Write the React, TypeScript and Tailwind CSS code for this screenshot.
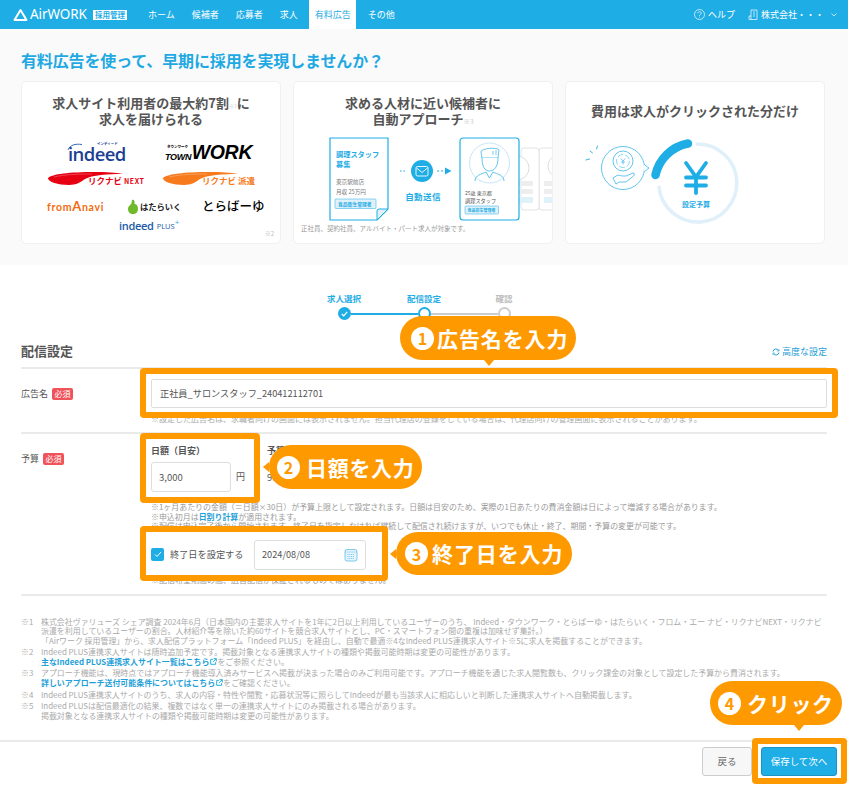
import React from "react";

const FONT = '"Noto Sans CJK JP", "Noto Sans", sans-serif';
const BLUE = "#1fade5";

function Frame({ className }: { className: string }) {
  return <div className={`absolute border-[6px] border-[#ff9900] rounded-[4px] pointer-events-none ${className}`} />;
}

function Num({ n }: { n: string }) {
  return (
    <span className="w-[23px] h-[23px] rounded-full bg-white text-[#ff9900] text-[16px] font-bold flex items-center justify-center shrink-0 leading-none tracking-normal">
      {n}
    </span>
  );
}

function Required() {
  return (
    <span className="inline-flex items-center justify-center w-[21px] h-[12px] rounded-[2px] bg-[#f0525a] text-white text-[8px] leading-none">
      必須
    </span>
  );
}

function Swoosh({ color, width }: { color: string; width: number }) {
  return (
    <svg width={width} height="15" viewBox="0 0 98 15" className="shrink-0">
      <path d="M0 7 C4 3 22 1 46 1 C58 1 68 1.500 75 3 C60 3 44 4 37 8 C33 11 28 14 21 14 C10 14 0 11 0 7Z" fill={color} />
      <path d="M6 6 C16 3.500 30 3 44 3" stroke="#fff" strokeWidth="0.5" fill="none" opacity="0.5" />
    </svg>
  );
}

function Logos() {
  return (
    <div className="flex flex-col mt-[19px]">
      <div className="flex h-[25px] items-start">
        <div className="ml-[46px] w-[97px] relative text-[#1c3f94] text-[18.500px] font-semibold leading-[16px] tracking-[-0.6px]" style={{ fontFamily: '"Open Sans", sans-serif' }}>
          indeed
          <svg width="16" height="8" viewBox="0 0 16 8" fill="none" stroke="#1c5aa8" strokeWidth="0.900" className="absolute -left-[1px] -top-[3px]">
            <path d="M1 7 C3 2 8 0.500 15 1.500" />
          </svg>
          <span className="absolute left-[29px] -top-[4px] text-[3.500px] leading-none tracking-normal" style={{ fontFamily: FONT }}>インディード</span>
        </div>
        <div className="flex items-end h-[16px] text-black italic font-black relative leading-none" style={{ fontFamily: '"Liberation Sans", sans-serif' }}>
          <span className="text-[9px] font-bold tracking-[-0.3px]">TOWN</span>
          <span className="text-[19.500px] font-bold tracking-[-0.3px] ml-[0.500px]">WORK</span>
          <span className="absolute left-[2px] -top-[1px] text-[3.500px] not-italic tracking-normal" style={{ fontFamily: FONT }}>タウンワーク</span>
        </div>
      </div>
      <div className="flex h-[24px] items-start">
        <div className="ml-[26px] w-[115px] relative h-[15px]">
          <Swoosh color="#e60012" width={98} />
          <span className="absolute left-[40px] top-[3px] text-[#e60012] text-[8.500px] font-bold leading-[12px] whitespace-nowrap">リクナビ <span className="text-[7px] tracking-[0.6px]">NEXT</span></span>
        </div>
        <div className="relative h-[15px]">
          <Swoosh color="#f77a1c" width={98} />
          <span className="absolute left-[39px] top-[3px] text-[#f77a1c] text-[8.500px] font-bold leading-[12px] whitespace-nowrap">リクナビ 派遣</span>
        </div>
      </div>
      <div className="flex h-[23px] items-center">
        <span className="ml-[25px] w-[81px] text-[#f26b10] text-[10.500px] font-bold leading-none tracking-[0.7px] whitespace-nowrap" style={{ fontFamily: '"Lato", sans-serif' }}>from<span className="text-[13px]">A</span>navi</span>
        <span className="w-[11px] h-[15px] mr-[1px] flex items-center">
          <svg width="10" height="15" viewBox="0 0 10 15"><path d="M4 1 C6 0 7 2 6.500 5 C9 5 10 7 10 10 C10 13 8 15 5 15 C2 15 0 13 0 10 C0 7 3 6 3.500 4Z" fill="#6fb92c" /></svg>
        </span>
        <span className="w-[62px] text-[#222] text-[8.300px] font-bold leading-none whitespace-nowrap">はたらいく</span>
        <span className="text-black text-[12.500px] font-medium leading-none whitespace-nowrap">とらばーゆ</span>
      </div>
      <div className="flex items-center mt-[2px] ml-[97px] leading-none" style={{ fontFamily: '"Open Sans", sans-serif' }}>
        <span className="text-[#1c5aa8] text-[11px] font-semibold tracking-[-0.3px]">indeed</span>
        <span className="text-[#1c5aa8] text-[7.500px] ml-[3px] mt-[2px]">PLUS</span>
        <span className="text-[#36a9e1] text-[8px] -mt-[8px]">+</span>
      </div>
    </div>
  );
}

function Approach() {
  return (
    <svg width="260" height="86" viewBox="0 0 260 86" className="mt-[10px] block">
      <g fontFamily={FONT}>
        <path d="M36 1 H94 V72 L83 83 H36 Z" fill="#fff" stroke={BLUE} strokeWidth="1.200" strokeLinejoin="round" />
        <path d="M94 72 H85 Q83 72 83 74 V83 Z" fill="#e1f1fa" stroke={BLUE} strokeWidth="1" strokeLinejoin="round" />
        <text x="42" y="20" fontSize="7.200" fontWeight="700" fill={BLUE}>調理スタッフ</text>
        <text x="42" y="30" fontSize="7.200" fontWeight="700" fill={BLUE}>募集</text>
        <text x="42" y="47" fontSize="5.600" fill="#777">東京駅前店</text>
        <text x="42" y="57" fontSize="5.600" fill="#777">月収 25万円</text>
        <rect x="41" y="62" width="41" height="9.500" rx="1" fill="#e1f1fa" stroke={BLUE} strokeWidth="0.500" />
        <text x="44" y="69" fontSize="4.800" fontWeight="700" fill={BLUE}>食品衛生管理者</text>

        <rect x="245" y="11" width="30" height="62" rx="3" fill="#fff" stroke="#e3e3e3" />
        <rect x="227" y="11" width="18" height="62" rx="3" fill="#fff" stroke="#e3e3e3" />
        <circle cx="223" cy="31" r="12" fill="#fff" stroke="#ddd" />
        <rect x="225" y="44" width="14" height="5" fill="#eee" /><rect x="225" y="52" width="14" height="5" fill="#eee" /><rect x="225" y="60" width="14" height="6" fill="#e1f1fa" />
        <circle cx="265" cy="29" r="11" fill="#fff" stroke="#ddd" />
        <rect x="250" y="44" width="10" height="5" fill="#eee" /><rect x="250" y="52" width="10" height="5" fill="#eee" /><rect x="250" y="60" width="10" height="6" fill="#e1f1fa" />

        <rect x="166" y="1" width="59" height="82" rx="3" fill="#fff" stroke={BLUE} strokeWidth="1.200" />
        <circle cx="195.500" cy="26" r="20" fill="#fff" stroke="#c5e5f6" strokeWidth="1" />
        <path d="M187 15 C187 11 204 10 205 13 L204 21 H188 Z" fill="#fff" stroke={BLUE} strokeWidth="0.700" />
        <path d="M188 21 C188 30 191 34 195.500 34 C200 34 204 30 204 21" fill="#fff" stroke={BLUE} strokeWidth="0.700" />
        <path d="M181 44 C181 38 188 37 192 35 M210 44 C210 38 203 37 199 35 M192 35 L195.500 41 L199 35" fill="none" stroke={BLUE} strokeWidth="0.700" />
        <path d="M199 14 V18 M202 13 V18" stroke={BLUE} strokeWidth="0.600" />
        <text x="171" y="58" fontSize="5" fill="#555">25歳 東京都</text>
        <text x="171" y="66" fontSize="5.200" fill="#555">調理スタッフ</text>
        <rect x="171" y="69" width="33.500" height="8" rx="1" fill="#e1f1fa" stroke={BLUE} strokeWidth="0.500" />
        <text x="173.500" y="75" fontSize="4" fontWeight="700" fill={BLUE}>食品衛生管理者</text>

        <circle cx="128" cy="34" r="11" fill={BLUE} />
        <rect x="122" y="29.500" width="12" height="9.500" rx="1.500" fill="none" stroke="#fff" strokeWidth="0.900" />
        <path d="M122.500 31 L128 35.500 L133.500 31" fill="none" stroke="#fff" strokeWidth="0.900" />
        <path d="M106 34 H113" stroke={BLUE} strokeWidth="1.200" strokeDasharray="1.500 2" />
        <path d="M143 34 H151" stroke={BLUE} strokeWidth="1.200" strokeDasharray="2 2" />
        <path d="M151 30.500 L157.500 34 L151 37.500 Z" fill={BLUE} />
        <text x="129" y="63" fontSize="8.500" fontWeight="700" fill={BLUE} textAnchor="middle" letterSpacing="0.400">自動送信</text>
      </g>
    </svg>
  );
}

function Budget() {
  return (
    <svg width="258" height="110" viewBox="0 0 258 110" className="block mt-[2px]">
      <g fontFamily={FONT} fill="none">
        <circle cx="57" cy="47" r="21.500" fill="#fff" stroke={BLUE} strokeWidth="0.700" />
        <path d="M78 43.500 L83 47 L78.500 50.500" fill="#fff" stroke={BLUE} strokeWidth="0.700" strokeLinejoin="round" />
        <path d="M78 44.500 V49.500" stroke="#fff" strokeWidth="1.400" />
        <circle cx="57" cy="40" r="10" stroke={BLUE} strokeWidth="0.700" />
        <circle cx="57" cy="40" r="6.500" stroke={BLUE} strokeWidth="0.500" strokeDasharray="6 2" />
        <path d="M54.800 37.500 L57 40 L59.200 37.500 M57 40 V43.500 M55 41 H59" stroke={BLUE} strokeWidth="0.600" />
        <path d="M47 57 L51 54.500 C53 53.500 54 55 57 55 H60 L67 52 C69 52 68.500 54 67.500 55 L60 61 H53 L50 63 Z" stroke={BLUE} strokeWidth="0.700" fill="#fff" strokeLinejoin="round" />
        <path d="M20 39 L23.500 38 M24 30 L26.500 32 M31.500 25 L30.500 28" stroke={BLUE} strokeWidth="0.900" strokeLinecap="round" />
        <path d="M131 23 A39 39 0 1 1 93 66" stroke="#e0f0fa" strokeWidth="3.500" strokeLinecap="round" />
        <path d="M122 22.500 A41 41 0 0 0 89.500 54" stroke={BLUE} strokeWidth="8.500" strokeLinecap="round" />
        <path d="M120 42 L130 56 L140 42 M130 56 V72 M120 56.500 H140 M120 64.500 H140" stroke={BLUE} strokeWidth="3.800" strokeLinecap="round" strokeLinejoin="round" />
        <text x="130" y="86" fontSize="7" fontWeight="700" fill={BLUE} textAnchor="middle" stroke="none">設定予算</text>
      </g>
    </svg>
  );
}

function ExtIcon() {
  return (
    <svg width="7" height="7" viewBox="0 0 10 10" className="inline-block align-baseline mx-[0.500px]" fill="none" stroke={BLUE} strokeWidth="1.400">
      <path d="M4 2 H1 V9 H8 V6" />
      <path d="M5 1 H9 V5 M9 1 L4.500 5.500" />
    </svg>
  );
}

function Foot({ mark, children }: { mark: string; children: React.ReactNode }) {
  return (
    <div className="flex mb-[2.500px]">
      <span className="w-[20px] shrink-0">{mark}</span>
      <div>{children}</div>
    </div>
  );
}

export default function App() {
  return (
    <div className="relative w-[848px] h-[788px] overflow-hidden bg-white text-[#555]" style={{ fontFamily: FONT }}>
      <header className="h-[29px] bg-[#1fade5] flex items-center text-white text-[9px] whitespace-nowrap">
        <div className="flex items-center ml-[13px] w-[130px]">
          <svg width="15" height="14" viewBox="0 0 15 14" fill="none" stroke="#fff" strokeWidth="2" strokeLinejoin="round"><path d="M7.500 2 L13.500 12 H1.500 Z" /></svg>
          <span className="ml-[2px] w-[58px] text-[13.500px] leading-none tracking-[-0.1px]" style={{ fontFamily: '"Noto Sans", sans-serif' }}>AirWORK</span>
          <span className="ml-[5px] w-[34px] h-[10px] bg-white text-[#1fade5] text-[7.500px] leading-none font-bold flex items-center justify-center">採用管理</span>
        </div>
        <nav className="flex h-full -ml-[0.500px] gap-[6px]">
          {["ホーム", "候補者", "応募者", "求人", "有料広告", "その他"].map((t) => (
            <span key={t} className={`h-full flex items-center px-[5.500px] ${t === "有料広告" ? "bg-white text-[#1fade5]" : ""}`}>{t}</span>
          ))}
        </nav>
        <div className="ml-auto flex items-center mr-[11px]">
          <svg width="11" height="11" viewBox="0 0 11 11" fill="none" stroke="#fff" strokeWidth="0.700">
            <circle cx="5.500" cy="5.500" r="5" />
            <path d="M3.800 4.200 C3.800 2.200 7.300 2.200 7.300 4.200 C7.300 5.400 5.500 5.300 5.500 6.800 M5.500 7.800 V8.600" />
          </svg>
          <span className="ml-[3px]">ヘルプ</span>
          <svg width="10" height="11" viewBox="0 0 10 11" fill="none" stroke="#fff" strokeWidth="0.700" className="ml-[13px]">
            <path d="M3 10.500 V1 H9 V10.500 H3 M3 7 H1 V10.500 H3 M5 3 H7 M5 5 H7 M5 7 H7" />
          </svg>
          <span className="ml-[3px]">株式会社・・・</span>
          <svg width="6" height="4" viewBox="0 0 6 4" fill="none" stroke="#fff" strokeWidth="0.700" className="ml-[7px]"><path d="M0.500 0.500 L3 3 L5.500 0.500" /></svg>
        </div>
      </header>

      <section className="h-[236px] bg-[#fafafa] px-[21px]">
        <h1 className="pt-[21px] h-[52px] text-[#1fa9e3] text-[16px] leading-[20px] font-bold whitespace-nowrap tracking-[-0.13px]">有料広告を使って、早期に採用を実現しませんか？</h1>
        <div className="grid grid-cols-[260px_260px_260px] gap-[12px]">
          <div className="relative h-[163px] bg-white rounded-[5px] border border-[#f0f0f0] pt-[13px]">
            <p className="text-center text-[13px] leading-[16px] font-bold text-[#555]">
              求人サイト利用者の最大約7割<span className="text-[5px] leading-[0] font-normal text-[#ccc]">※1</span>に<br />求人を届けられる
            </p>
            <Logos />
            <span className="absolute right-[6px] bottom-[5px] text-[6px] text-[#bbb]">※2</span>
          </div>
          <div className="h-[163px] bg-white rounded-[5px] border border-[#f0f0f0] pt-[13px] overflow-hidden">
            <p className="text-center text-[13px] leading-[16px] font-bold text-[#555]">
              求める人材に近い候補者に<br />自動アプローチ<span className="text-[6.500px] leading-[0] font-normal text-[#ccc]">※3</span>
            </p>
            <Approach />
            <p className="ml-[7px] text-[6.500px] leading-[10px] text-[#999] whitespace-nowrap">正社員、契約社員、アルバイト・パート求人が対象です。</p>
          </div>
          <div className="h-[163px] bg-white rounded-[5px] border border-[#f0f0f0] pt-[21px]">
            <p className="text-center text-[13px] leading-[16px] font-bold text-[#555]">費用は求人がクリックされた分だけ</p>
            <Budget />
          </div>
        </div>
      </section>

      <main className="px-[21px]">
        <div className="flex flex-col items-center pt-[27px] h-[74px]">
          <div className="flex w-[240px] text-[8.500px] leading-[12px] font-bold text-center">
            <span className="w-[80px] text-[#1fade5]">求人選択</span>
            <span className="w-[80px] text-[#1fade5]">配信設定</span>
            <span className="w-[80px] text-[#bbb]">確認</span>
          </div>
          <div className="flex items-center mt-[3px]">
            <span className="w-[13px] h-[13px] rounded-full bg-[#1fade5] flex items-center justify-center">
              <svg width="7" height="6" viewBox="0 0 7 6" fill="none" stroke="#fff" strokeWidth="1.200"><path d="M0.800 3 L2.700 4.800 L6.200 0.800" /></svg>
            </span>
            <span className="w-[67px] h-[2px] bg-[#1fade5]" />
            <span className="w-[13px] h-[13px] rounded-full border-2 border-[#1fade5] bg-white" />
            <span className="w-[67px] h-[2px] bg-[#ccc]" />
            <span className="w-[13px] h-[13px] rounded-full border-2 border-[#ccc] bg-white" />
          </div>
        </div>

        <div className="flex items-end justify-between h-[30px] pb-[6px] border-b-2 border-[#eaeaea]">
          <h2 className="text-[13px] leading-[20px] font-bold text-[#555]">配信設定</h2>
          <span className="flex items-center text-[#1fa0d8] text-[9px] leading-[12px] mb-[3px]">
            <svg width="8" height="8" viewBox="0 0 8 8" fill="none" stroke="#1fa0d8" strokeWidth="1" className="mr-[2px]">
              <path d="M1 3.500 A3 3 0 0 1 6.600 2.500 M7 4.500 A3 3 0 0 1 1.400 5.500" />
              <path d="M7 1 V3 H5 M1 7 V5 H3" strokeWidth="0.700" />
            </svg>
            高度な設定
          </span>
        </div>

        <div className="flex h-[65px] border-b-2 border-[#eaeaea]">
          <div className="w-[130px] flex items-center gap-[4px] h-[49px] text-[9px]">
            <span>広告名</span>
            <Required />
          </div>
          <div className="flex-1 pt-[10px]">
            <div className="h-[29px] border border-[#ddd] rounded-[2px] bg-white flex items-center pl-[8px] text-[9.200px] text-[#555]">正社員_サロンスタッフ_240412112701</div>
            <p className="mt-[5px] text-[8px] leading-[11px] text-[#aaa] whitespace-nowrap">※設定した広告名は、求職者向けの画面には表示されません。担当代理店の登録をしている場合は、代理店向けの管理画面に表示されることがあります。</p>
          </div>
        </div>

        <div className="flex h-[162px] border-b-2 border-[#eaeaea]">
          <div className="w-[130px] flex items-start gap-[4px] pt-[19px] text-[9px] leading-[12px]">
            <span>予算</span>
            <Required />
          </div>
          <div className="flex-1 pt-[10px]">
            <div className="flex">
              <div className="w-[116px]">
                <div className="text-[9px] leading-[14px] font-bold">日額（目安）</div>
                <div className="flex items-center mt-[4px]">
                  <div className="w-[80px] h-[30px] border border-[#ddd] rounded-[3px] bg-white flex items-center pl-[7px] text-[9.500px]">3,000</div>
                  <span className="ml-[5px] text-[9px]">円</span>
                </div>
              </div>
              <div>
                <div className="text-[9px] leading-[14px] font-bold">予算上限（月額）</div>
                <div className="mt-[4px] h-[30px] flex items-center text-[9.500px]">90,000円</div>
              </div>
            </div>
            <div className="mt-[10px] text-[7.950px] leading-[9.500px] text-[#999] whitespace-nowrap">
              <p>※1ヶ月あたりの金額（＝日額×30日）が予算上限として設定されます。日額は目安のため、実際の1日あたりの費消金額は日によって増減する場合があります。</p>
              <p>※申込初月は<span className="text-[#1fa0d8] font-bold">日割り計算</span>が適用されます。</p>
              <p>※配信は申込完了後から開始されます。終了日を指定しなければ継続して配信され続けますが、いつでも休止・終了、期間・予算の変更が可能です。</p>
            </div>
            <div className="flex items-center mt-[9px] h-[30px]">
              <span className="w-[13px] h-[13px] rounded-[2px] bg-[#1fade5] flex items-center justify-center">
                <svg width="8" height="7" viewBox="0 0 8 7" fill="none" stroke="#fff" strokeWidth="1"><path d="M1 3.500 L3 5.500 L7 1" /></svg>
              </span>
              <span className="ml-[6px] w-[84px] text-[9.200px] whitespace-nowrap">終了日を設定する</span>
              <div className="w-[112px] h-[30px] border border-[#ddd] rounded-[3px] bg-white flex items-center justify-between pl-[7px] pr-[7px] text-[9.200px]">
                2024/08/08
                <svg width="14" height="14" viewBox="0 0 14 14" fill="none" stroke="#5dbde9" strokeWidth="0.800">
                  <rect x="1" y="1.500" width="12" height="11.500" rx="2" fill="#e6f4fb" />
                  <path d="M1 4 H13 M3.500 6.500 H10.500 M3.500 8.500 H10.500 M3.500 10.500 H10.500" strokeDasharray="1 0.800" />
                </svg>
              </div>
            </div>
            <p className="mt-[5px] text-[8px] leading-[10px] text-[#999] whitespace-nowrap">※配信希望期間の間、広告配信が保証されるものではありません。</p>
          </div>
        </div>

        <div className="pt-[21px] h-[144px] text-[7.950px] leading-[9.300px] text-[#aaa] whitespace-nowrap">
          <Foot mark="※1">
            <p>株式会社ヴァリューズ シェア調査 2024年6月（日本国内の主要求人サイトを1年に2日以上利用しているユーザーのうち、 Indeed・タウンワーク・とらばーゆ・はたらいく・フロム・エー ナビ・リクナビNEXT・リクナビ</p>
            <p>派遣を利用しているユーザーの割合。人材紹介等を除いた約60サイトを競合求人サイトとし、PC・スマートフォン間の重複は加味せず集計。）</p>
            <p>「Airワーク 採用管理」から、求人配信プラットフォーム「Indeed PLUS」を経由し、自動で最適※4なIndeed PLUS連携求人サイト※5に求人を掲載することができます。</p>
          </Foot>
          <Foot mark="※2">
            <p>Indeed PLUS連携求人サイトは随時追加予定です。掲載対象となる連携求人サイトの種類や掲載可能時期は変更の可能性があります。</p>
            <p><span className="text-[#1fa0d8] font-bold">主なIndeed PLUS連携求人サイト一覧はこちら</span><ExtIcon />をご参照ください。</p>
          </Foot>
          <Foot mark="※3">
            <p>アプローチ機能は、現時点ではアプローチ機能導入済みサービスへ掲載が決まった場合のみご利用可能です。アプローチ機能を通じた求人閲覧数も、クリック課金の対象として設定した予算から費消されます。</p>
            <p><span className="text-[#1fa0d8] font-bold">詳しいアプローチ送付可能条件についてはこちら</span><ExtIcon />をご確認ください。</p>
          </Foot>
          <Foot mark="※4">
            <p>Indeed PLUS連携求人サイトのうち、求人の内容・特性や閲覧・応募状況等に照らしてIndeedが最も当該求人に相応しいと判断した連携求人サイトへ自動掲載します。</p>
          </Foot>
          <Foot mark="※5">
            <p>Indeed PLUSは配信最適化の結果、複数ではなく単一の連携求人サイトにのみ掲載される場合があります。</p>
            <p>掲載対象となる連携求人サイトの種類や掲載可能時期は変更の可能性があります。</p>
          </Foot>
        </div>
      </main>

      <footer className="h-[47px] border-t-2 border-[#eaeaea] flex items-start justify-end pt-[5px] pr-[11px] gap-[9px]">
        <button className="w-[50px] h-[29px] rounded-[3px] border border-[#ccc] bg-[#f7f7f7] text-[9.500px] text-[#666]">戻る</button>
        <button className="w-[76px] h-[29px] rounded-[3px] bg-[#1fade5] border border-[#1a93c5] text-[9.500px] text-white">保存して次へ</button>
      </footer>

      <Frame className="left-[140px] top-[368px] w-[698px] h-[50px]" />
      <Frame className="left-[140px] top-[433px] w-[120px] h-[70px]" />
      <Frame className="left-[140px] top-[526px] w-[248px] h-[55px]" />
      <Frame className="left-[752px] top-[738px] w-[95px] h-[46px]" />

      <div className="absolute left-[400px] top-[316px] w-[176px] h-[44px] rounded-full bg-[#ff9900] text-white font-bold text-[21px] leading-none flex items-center pl-[11px] gap-[3px] whitespace-nowrap tracking-[0.9px]">
        <Num n="1" />広告名を入力
        <span className="absolute left-[84px] -bottom-[6px] border-x-[5px] border-x-transparent border-t-[6px] border-t-[#ff9900]" />
      </div>
      <div className="absolute left-[269px] top-[445px] w-[153px] h-[44px] rounded-full bg-[#ff9900] text-white font-bold text-[21px] leading-none flex items-center pl-[8px] gap-[6px] whitespace-nowrap tracking-[0.7px]">
        <Num n="2" />日額を入力
        <span className="absolute -left-[6px] top-[17px] border-y-[5px] border-y-transparent border-r-[6px] border-r-[#ff9900]" />
      </div>
      <div className="absolute left-[396px] top-[532px] w-[176px] h-[43px] rounded-full bg-[#ff9900] text-white font-bold text-[21px] leading-none flex items-center pl-[9px] gap-[4px] whitespace-nowrap tracking-[0.9px]">
        <Num n="3" />終了日を入力
        <span className="absolute -left-[6px] top-[17px] border-y-[5px] border-y-transparent border-r-[6px] border-r-[#ff9900]" />
      </div>
      <div className="absolute left-[710px] top-[681px] w-[132px] h-[44px] rounded-full bg-[#ff9900] text-white font-bold text-[21px] leading-none flex items-center pl-[8px] gap-[6px] whitespace-nowrap tracking-[0.7px]">
        <Num n="4" />クリック
        <span className="absolute left-[84px] -bottom-[6px] border-x-[5px] border-x-transparent border-t-[6px] border-t-[#ff9900]" />
      </div>
    </div>
  );
}
